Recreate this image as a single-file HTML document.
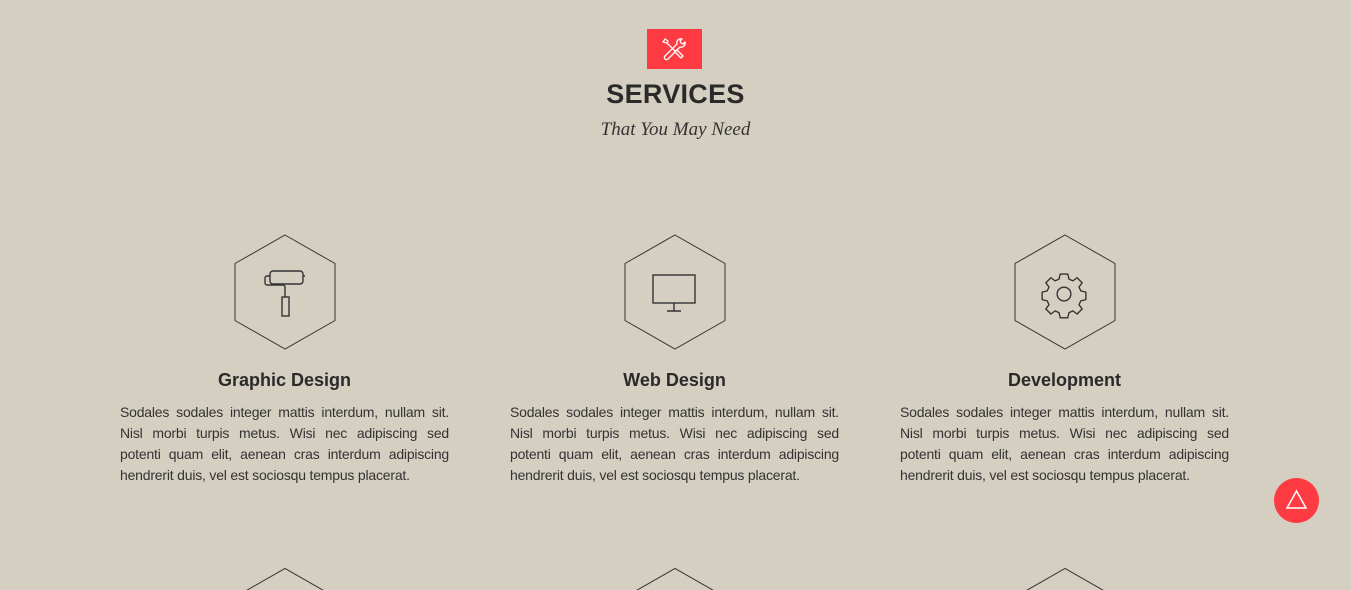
<!DOCTYPE html>
<html><head><meta charset="utf-8"><style>
body{margin:0;width:1351px;height:590px;background:#d5cfc1;overflow:hidden;position:relative;font-family:"Liberation Sans",sans-serif;color:#2a2a2a}
.badge{position:absolute;left:647px;top:29px;width:55px;height:40px;background:#fe3a43}
h1{position:absolute;left:0;width:1351px;top:79px;margin:0;text-align:center;font-size:27px;font-weight:bold;letter-spacing:0.3px;color:#2a2a2a}
.sub{position:absolute;left:0;width:1351px;top:119px;text-align:center;font-family:"Liberation Serif",serif;font-style:italic;font-size:19px;color:#333}
.col{position:absolute;width:329px;top:234px}
.col svg.hex{position:absolute;left:114px;top:0}
.col h3{position:absolute;top:136px;left:0;width:329px;text-align:center;margin:0;font-size:18px;font-weight:bold;color:#2a2a2a}
.col p{position:absolute;top:168px;left:0;width:329px;margin:0;font-size:14px;letter-spacing:-0.2px;line-height:21px;color:#333}
.col p span{display:block;text-align:justify;text-align-last:justify;white-space:nowrap}
.col p span.l{text-align-last:left}
.up{position:absolute;left:1274px;top:478px;width:45px;height:45px;border-radius:50%;background:#fe3a43}
</style></head><body>
<div class="badge"><svg width="55" height="40" viewBox="0 0 55 40" fill="none" stroke="#fff" stroke-width="1.3" stroke-linejoin="round"><path d="M16 13l2-3 3 2-1 2zM20 14l9 9M28 22l2-1 6 6-2 2-6-6z"/><path d="M38 13a4 4 0 0 1-5 5L21 30a2 2 0 0 1-3-3l12-12a4 4 0 0 1 5-5l-2 2 1 2 2 1z"/></svg></div>
<h1>SERVICES</h1>
<div class="sub">That You May Need</div>

<div class="col" style="left:120px">
<svg class="hex" width="102" height="116" viewBox="0 0 102 116"><polygon points="51,1 101,29.5 101,86.5 51,115 1,86.5 1,29.5" fill="none" stroke="#333" stroke-width="1"/>
<g fill="none" stroke="#333" stroke-width="1.4"><rect x="36" y="37" width="33" height="13" rx="3"/><path d="M69 42h2M36 42h-3a2 2 0 0 0-2 2v5a2 2 0 0 0 2 2h16a2 2 0 0 1 2 2v10"/><rect x="48" y="63" width="7" height="19"/></g></svg>
<h3>Graphic Design</h3>
<p><span>Sodales sodales integer mattis interdum, nullam sit.</span><span>Nisl morbi turpis metus. Wisi nec adipiscing sed</span><span>potenti quam elit, aenean cras interdum adipiscing</span><span class="l">hendrerit duis, vel est sociosqu tempus placerat.</span></p>
</div>

<div class="col" style="left:510px">
<svg class="hex" width="102" height="116" viewBox="0 0 102 116"><polygon points="51,1 101,29.5 101,86.5 51,115 1,86.5 1,29.5" fill="none" stroke="#333" stroke-width="1"/>
<g fill="none" stroke="#333" stroke-width="1.4"><rect x="29" y="41" width="42" height="28"/><path d="M50 69v8M43 77h14"/></g></svg>
<h3>Web Design</h3>
<p><span>Sodales sodales integer mattis interdum, nullam sit.</span><span>Nisl morbi turpis metus. Wisi nec adipiscing sed</span><span>potenti quam elit, aenean cras interdum adipiscing</span><span class="l">hendrerit duis, vel est sociosqu tempus placerat.</span></p>
</div>

<div class="col" style="left:900px">
<svg class="hex" width="102" height="116" viewBox="0 0 102 116"><polygon points="51,1 101,29.5 101,86.5 51,115 1,86.5 1,29.5" fill="none" stroke="#333" stroke-width="1"/>
<g fill="none" stroke="#333" stroke-width="1.1" transform="translate(50 60) scale(1.25) translate(-50 -60)"><circle cx="50" cy="60" r="5.5"/><path d="M47 44h6l1 4 3 1.5 3.5-2.5 4 4-2.5 3.5 1.5 3 4 1v6l-4 1-1.5 3 2.5 3.5-4 4-3.5-2.5-3 1.5-1 4h-6l-1-4-3-1.5-3.5 2.5-4-4 2.5-3.5-1.5-3-4-1v-6l4-1 1.5-3-2.5-3.5 4-4 3.5 2.5 3-1.5z"/></g></svg>
<h3>Development</h3>
<p><span>Sodales sodales integer mattis interdum, nullam sit.</span><span>Nisl morbi turpis metus. Wisi nec adipiscing sed</span><span>potenti quam elit, aenean cras interdum adipiscing</span><span class="l">hendrerit duis, vel est sociosqu tempus placerat.</span></p>
</div>

<svg style="position:absolute;left:0;top:560px" width="1351" height="30"><g fill="none" stroke="#333" stroke-width="1"><polyline points="235,37 285,8.5 335,37"/><polyline points="625,37 675,8.5 725,37"/><polyline points="1015,37 1065,8.5 1115,37"/></g></svg>

<div class="up"><svg width="45" height="45" viewBox="0 0 45 45"><polygon points="22.5,13 32,30 13,30" fill="none" stroke="#fff" stroke-width="1.5"/></svg></div>
</body></html>
